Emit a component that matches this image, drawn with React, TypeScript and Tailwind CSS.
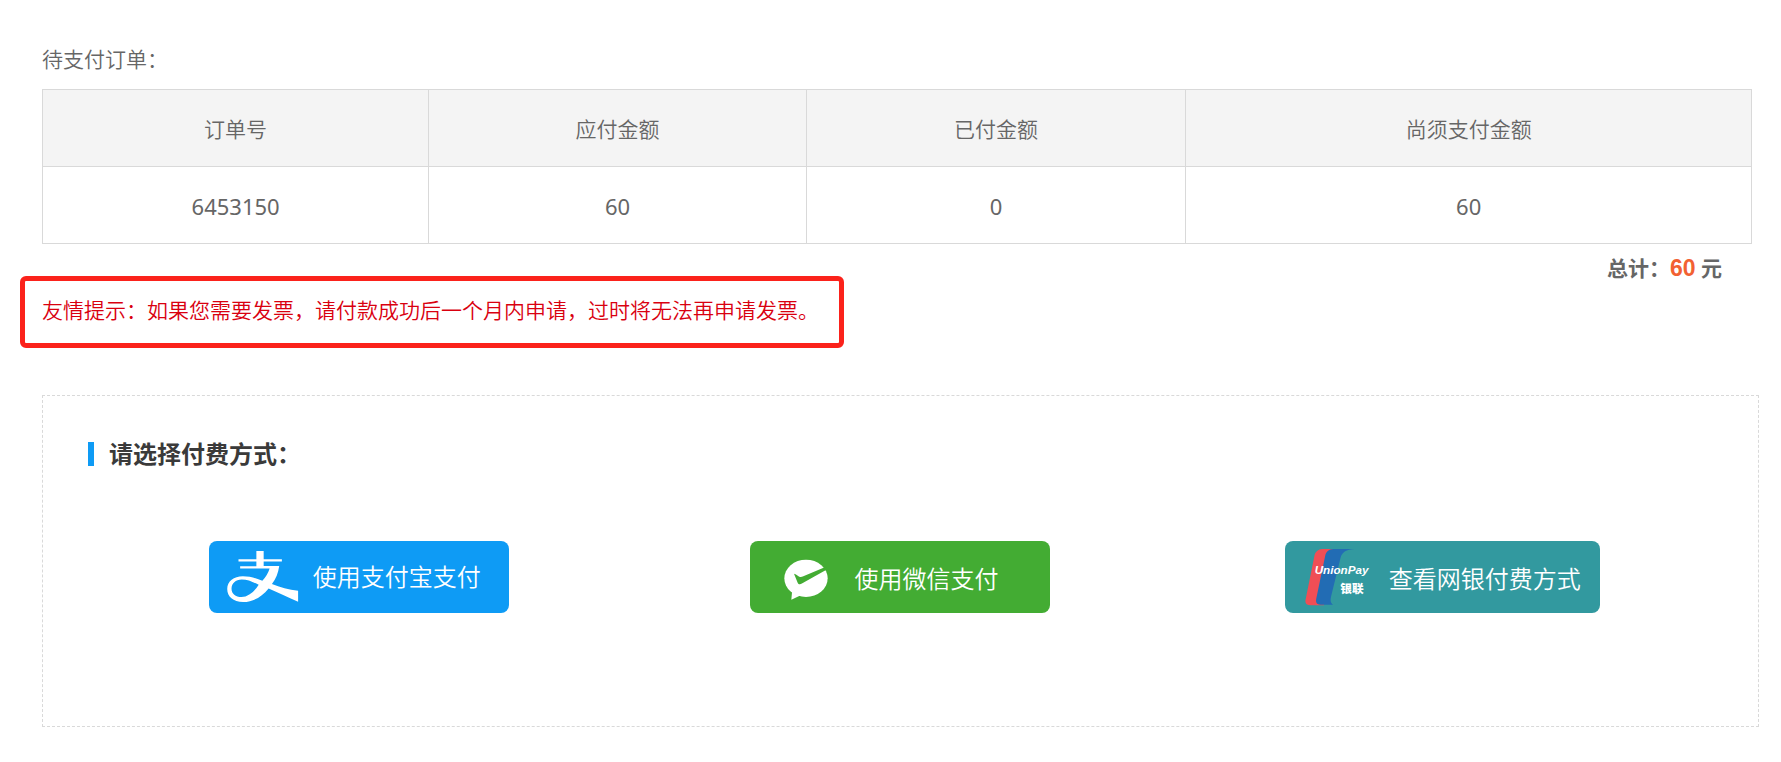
import type { ReactNode } from "react";

const order = { id: "6453150", due: "60", paid: "0", remaining: "60" };

function AlipayIcon() {
  return (
    <svg viewBox="113 90 216 157" className="h-[52px] w-[72px] shrink-0" fill="#fff" aria-hidden="true">
      <path d="M201 90H223V115H278V122H223V135H270C267 156 260 174 248 190C272 200 299 207 327 210V243C295 229 264 214 238 203C217 228 192 244 161 244C131 244 113 228 113 205C113 181 133 166 160 166C183 166 203 173 219 180C229 169 237 157 241 143H152V136H201V122H147V115H201ZM208 192C190 183 175 176 157 176C138 176 126 188 126 204C126 219 138 229 156 229C177 229 195 212 208 192Z" fillRule="evenodd" />
    </svg>
  );
}

function WechatPayIcon() {
  return (
    <svg viewBox="162 120 132 123" className="h-[41px] w-[44px] shrink-0" aria-hidden="true">
      <ellipse cx="228" cy="178" rx="65" ry="56" fill="#fff" />
      <path d="M187 210L184 242L214 228Z" fill="#fff" />
      <path d="M192 164C198 165 203 170 208 173C212 175 215 174 220 172L286 144L292 151L217 193C210 197 206 197 203 191Z" fill="#43ac33" />
    </svg>
  );
}

function UnionPayIcon() {
  return (
    <svg viewBox="103 82 198 174" className="h-[58px] w-[66px] shrink-0" aria-hidden="true">
      <path d="M155 85H196L160 254H120C107 254 102 247 105 236L131 107C134 92 142 86 155 85Z" fill="#f04e55" />
      <path d="M188 85H252C226 87 216 93 210 110L181 228C178 242 181 248 188 252H150C138 252 134 245 137 233L163 108C166 92 174 86 188 85Z" fill="#226cb4" />
      <text x="132" y="161" fill="#fff" fontSize="35" fontWeight="700" fontStyle="italic" fontFamily="'Liberation Sans', sans-serif">UnionPay</text>
      <text x="209" y="216" fill="#fff" fontSize="35" fontWeight="900" fontFamily="'Noto Sans CJK SC', sans-serif">银联</text>
    </svg>
  );
}

function PayButton({ className, children }: { className: string; children: ReactNode }) {
  return (
    <button
      type="button"
      className={`flex h-[72px] cursor-pointer items-center rounded-lg text-2xl font-[350] whitespace-nowrap text-white ${className}`}
    >
      {children}
    </button>
  );
}

export default function App() {
  const th = "h-[77px] border border-[#d9d9d9] pt-0.5 font-[350]";
  const td = "h-[77px] border border-[#d9d9d9] pt-0.5 text-[22px] font-normal";
  return (
    <main className="min-h-screen bg-white pt-[43px] pr-[22px] pb-[34px] pl-5 font-['Noto_Sans','Noto_Sans_CJK_SC',sans-serif] text-[21px] leading-8 text-[#666]">
      <div className="pr-[7px] pl-[22px]">
        <h1 className="font-[350]">待支付订单：</h1>
        <table className="mt-3.5 w-full table-fixed border-collapse text-center">
          <colgroup>
            <col className="w-[22.6%]" />
            <col className="w-[22.1%]" />
            <col className="w-[22.2%]" />
            <col />
          </colgroup>
          <thead className="bg-[#f4f4f4]">
            <tr>
              <th className={th}>订单号</th>
              <th className={th}>应付金额</th>
              <th className={th}>已付金额</th>
              <th className={th}>尚须支付金额</th>
            </tr>
          </thead>
          <tbody>
            <tr>
              <td className={td}>{order.id}</td>
              <td className={td}>{order.due}</td>
              <td className={td}>{order.paid}</td>
              <td className={td}>{order.remaining}</td>
            </tr>
          </tbody>
        </table>
        <p className="pt-2 pr-[30px] text-right font-bold">
          总计：<span className="font-['Liberation_Sans',sans-serif] text-[23px] text-[#f26132]">{order.remaining}</span> 元
        </p>
      </div>

      <p className="-mt-2 flex h-[72px] w-fit items-center rounded-md border-[5px] border-[#fb221b] pr-5 pb-1 pl-[17px] font-[350] text-[#d9000f]">
        友情提示：如果您需要发票，请付款成功后一个月内申请，过时将无法再申请发票。
      </p>

      <section className="mt-[47px] ml-[22px] border border-dashed border-[#d9d9d9] px-[45px] pt-[42px] pb-[113px]">
        <h2 className="flex items-center gap-[15px] text-2xl font-bold text-[#3a3a3a]">
          <span className="h-6 w-1.5 bg-[#0e9bf5]" />
          请选择付费方式：
        </h2>
        <div className="mt-[71px] grid grid-cols-3 justify-items-center">
          <PayButton className="w-[300px] gap-3.5 bg-[#0e9bf5] pl-[18px]">
            <AlipayIcon />
            使用支付宝支付
          </PayButton>
          <PayButton className="w-[300px] gap-[26px] bg-[#43ac33] pt-1 pl-[34px]">
            <WechatPayIcon />
            使用微信支付
          </PayButton>
          <PayButton className="w-[315px] gap-[18px] bg-[#32999f] pl-5">
            <UnionPayIcon />
            <span className="pt-1">查看网银付费方式</span>
          </PayButton>
        </div>
      </section>
    </main>
  );
}
